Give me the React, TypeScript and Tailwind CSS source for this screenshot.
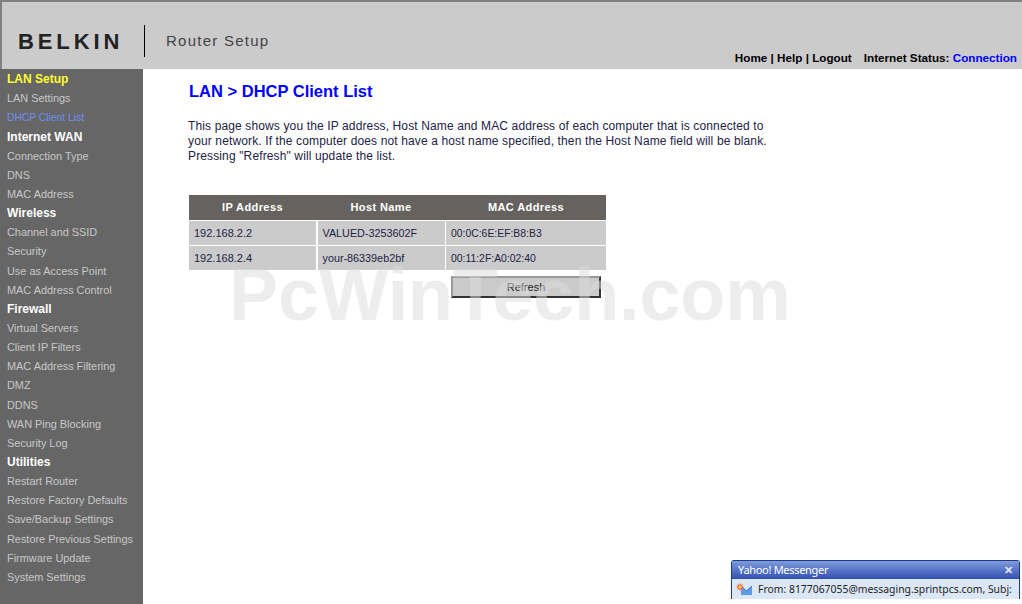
import React from "react";

const MENU = [
  { label: "LAN Setup", kind: "active-head" },
  { label: "LAN Settings" },
  { label: "DHCP Client List", kind: "current" },
  { label: "Internet WAN", kind: "head" },
  { label: "Connection Type" },
  { label: "DNS" },
  { label: "MAC Address" },
  { label: "Wireless", kind: "head" },
  { label: "Channel and SSID" },
  { label: "Security" },
  { label: "Use as Access Point" },
  { label: "MAC Address Control" },
  { label: "Firewall", kind: "head" },
  { label: "Virtual Servers" },
  { label: "Client IP Filters" },
  { label: "MAC Address Filtering" },
  { label: "DMZ" },
  { label: "DDNS" },
  { label: "WAN Ping Blocking" },
  { label: "Security Log" },
  { label: "Utilities", kind: "head" },
  { label: "Restart Router" },
  { label: "Restore Factory Defaults" },
  { label: "Save/Backup Settings" },
  { label: "Restore Previous Settings" },
  { label: "Firmware Update" },
  { label: "System Settings" },
];

const CLIENTS = [
  { ip: "192.168.2.2", host: "VALUED-3253602F", mac: "00:0C:6E:EF:B8:B3" },
  { ip: "192.168.2.4", host: "your-86339eb2bf", mac: "00:11:2F:A0:02:40" },
];

const itemClass = (kind?: string) => {
  if (kind === "active-head") return "text-xs font-bold text-[#ffff33]";
  if (kind === "head") return "text-xs font-bold text-white";
  if (kind === "current") return "text-[10.3px] text-[#6f8fef]";
  return "text-[10.9px] text-[#c8c8c8]";
};

const MailIcon = () => (
  <svg className="shrink-0" width="17" height="14" viewBox="0 0 17 14">
    <rect x="5" y="3" width="11" height="9" fill="#5f9be6" />
    <path d="M5 3l5.5 5L16 3" fill="#d7e8fb" stroke="#2f6cc0" strokeWidth="1" />
    <path d="M4 0l1 2 2-1-1 2 2 1-2 1 1 2-2-1-1 2-1-2-2 1 1-2-2-1 2-1-1-2 2 1z" fill="#ef6a3c" />
    <circle cx="4" cy="4" r="1.5" fill="#fbd34d" />
  </svg>
);

const App: React.FC = () => {
  return (
    <div className="relative flex flex-col h-[604px] w-[1022px] overflow-hidden bg-white font-['Liberation_Sans',Arial,sans-serif]">
      <header className="flex justify-between h-[69px] bg-[#cbcbcb] border-t-2 border-l-2 border-[#808080]">
        <div className="flex items-center pl-4 pt-[11px]">
          <span className="text-[22px] font-bold tracking-[3.9px] text-[#222222] w-[126px]">BELKIN</span>
          <div className="h-8 w-px bg-black" />
          <span className="ml-[21px] text-[15px] tracking-[1.25px] text-[#444444]">Router Setup</span>
        </div>
        <div className="flex items-end pr-[5px] pb-[2px] text-[11.7px] font-bold text-black">
          <span>Home | Help | Logout</span>
          <span className="ml-3">
            Internet Status: <span className="text-[#0000ff]">Connection</span>
          </span>
        </div>
      </header>

      <div className="flex flex-1">
        <nav className="w-[143px] bg-[#666666] pl-[7px] pt-[1.2px]">
          {MENU.map((m) => (
            <div key={m.label} className={"h-[19.15px] leading-[19.15px] whitespace-nowrap " + itemClass(m.kind)}>
              {m.label}
            </div>
          ))}
        </nav>

        <main className="flex-1 pl-[45px] pt-[12px]">
          <h1 className="ml-px text-[16.5px] leading-5 font-bold text-[#0000ff]">LAN &gt; DHCP Client List</h1>
          <p className="mt-[18px] w-[582px] text-xs leading-[15px] tracking-[0.13px] text-[#222244]">
            This page shows you the IP address, Host Name and MAC address of each computer that is connected to
            your network. If the computer does not have a host name specified, then the Host Name field will be blank.
            Pressing "Refresh" will update the list.
          </p>

          <div className="ml-px mt-[31px] w-[417px] text-[11px] text-[#222244]">
            <div className="grid grid-cols-[127px_127px_160px] gap-x-[1.5px] h-[25px] bg-[#666260] font-bold text-white text-center leading-[25px] tracking-[0.4px]">
              <div>IP Address</div>
              <div>Host Name</div>
              <div>MAC Address</div>
            </div>
            {CLIENTS.map((c) => (
              <div key={c.ip} className="grid grid-cols-[127px_127px_160px] gap-x-[1.5px] h-6 mt-px leading-6">
                <div className="bg-[#cbcbcb] pl-[5px]">{c.ip}</div>
                <div className="bg-[#cbcbcb] pl-[5px] text-[10.8px]">{c.host}</div>
                <div className="bg-[#cbcbcb] pl-[5px] pt-px text-[10.4px] leading-[23px]">{c.mac}</div>
              </div>
            ))}
            <div className="flex justify-end mt-[6px] pr-[5px]">
              <button className="w-[150px] h-[22px] bg-[#cbcbcb] border-2 border-t-[#999999] border-l-[#999999] border-r-[#333333] border-b-[#333333] text-[11px] text-[#222222]">
                Refresh
              </button>
            </div>
          </div>
        </main>
      </div>

      {/* watermark sits over the page */}
      <div className="absolute left-[229px] top-[271px] text-[73.5px] leading-[48px] font-bold text-[#dcdcdc] opacity-50 pointer-events-none whitespace-nowrap">
        PcWinTech.com
      </div>

      {/* messenger toast */}
      <div className="absolute left-[731px] top-[560px] w-[289px] h-[39px] rounded-t-[3px] border border-[#1c3a8c] border-b-0 bg-[#dce7f6] font-['Noto_Sans',sans-serif]">
        <div className="flex items-center justify-between h-[18px] pt-px px-[6px] bg-linear-to-b from-[#7f9bdc] to-[#3450b0] text-[11px] tracking-[-0.3px] text-white">
          <span>Yahoo! Messenger</span>
          <span className="text-[11px] font-bold text-[#e4e9f5]">✕</span>
        </div>
        <div className="flex items-center h-5 pl-1 pt-px text-[10.4px] text-[#222222] whitespace-nowrap">
          <MailIcon />
          <span className="ml-[5px]">From: 8177067055@messaging.sprintpcs.com, Subj:</span>
        </div>
      </div>
    </div>
  );
};

export default App;
